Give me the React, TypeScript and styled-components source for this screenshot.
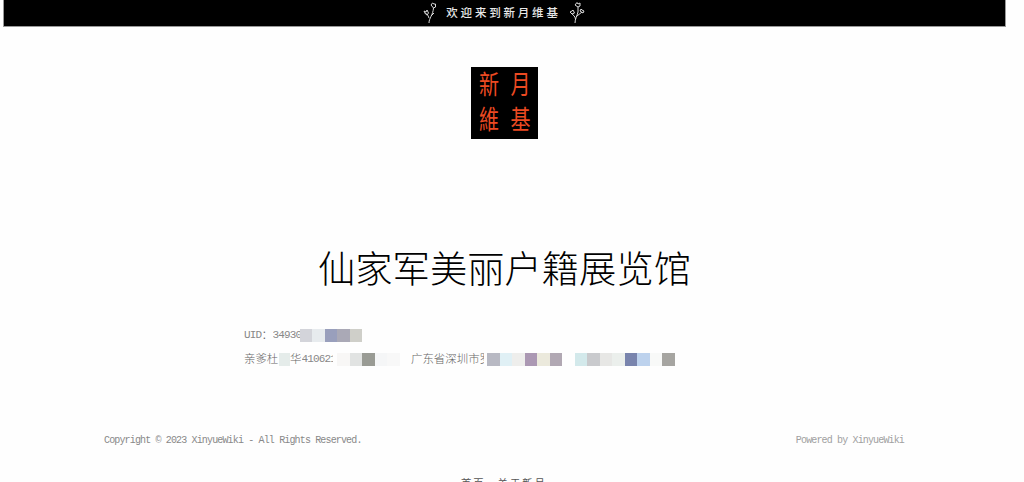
import React from 'react';
import styled, { createGlobalStyle } from 'styled-components';

const Global = createGlobalStyle`
  * { box-sizing: border-box; }
  html, body { margin: 0; background: #fff; overflow: hidden; }
`;

const Page = styled.div`
  display: flex;
  flex-direction: column;
  width: 1024px;
  height: 482px;
  padding: 0 18px 0 3px;
  overflow: hidden;
  background: #fefefe;
  font-family: 'Liberation Serif', 'Noto Sans CJK SC', sans-serif;
`;

const Banner = styled.header`
  display: flex;
  flex: none;
  justify-content: center;
  align-items: center;
  gap: 9px;
  height: 27px;
  padding: 0 1px 2px 0;
  background: #000;
  border: solid #999;
  border-width: 0 1px 1px;
  color: #e8e8e8;
`;

const Welcome = styled.span`
  font: 500 11.5px/24px 'Noto Sans CJK SC', sans-serif;
  letter-spacing: 2.8px;
  margin-right: -1px;
`;

const Seal = styled.div`
  display: grid;
  flex: none;
  grid-template-columns: 32px 31px;
  grid-template-rows: 35px 37px;
  justify-content: center;
  width: 67px;
  height: 72px;
  margin: 40px 0 0 468px;
  background: #000;
`;

const SealGlyph = styled.span`
  display: block;
  color: #ec4a22;
  font: 400 20px/34px 'Noto Sans CJK TC', sans-serif;
  text-align: center;
  transform: scaleY(1.32);
`;

const Title = styled.h1`
  flex: none;
  margin: 99px 0 0;
  color: #000;
  font: 300 37.3px/58px 'Noto Sans CJK SC', sans-serif;
  text-align: center;
  white-space: nowrap;
`;

const Record = styled.section`
  display: flex;
  flex: none;
  flex-direction: column;
  margin: 27px 0 0 241px;
`;

const Line = styled.div`
  display: flex;
  align-items: center;
  height: 24px;
  color: #777;
  white-space: nowrap;
`;

const Han = styled.span<{ $w?: number }>`
  flex: none;
  width: ${p => (p.$w ? `${p.$w}px` : 'auto')};
  overflow: hidden;
  padding-bottom: 2px;
  color: #666;
  font: 300 11.45px/20px 'Noto Sans CJK SC', sans-serif;
`;

const Mono = styled.span<{ $w: number }>`
  flex: none;
  width: ${p => p.$w}px;
  overflow: hidden;
  color: #888;
  font: 11px/22px 'Liberation Mono', monospace;
  letter-spacing: -0.87px;
`;

const Block = styled.i<{ $c: string; $w?: number }>`
  flex: none;
  width: ${p => p.$w ?? 12.5}px;
  height: 13px;
  background: ${p => p.$c};
`;

const Footer = styled.footer`
  display: flex;
  flex: none;
  justify-content: space-between;
  margin: 60px 102px 0 101px;
  color: #888;
  font: 10px/20px 'Liberation Mono', monospace;
  letter-spacing: -0.85px;
  white-space: pre;
`;

const Powered = styled.span`
  color: #a0a0a0;
`;

const Nav = styled.nav`
  display: flex;
  flex: none;
  gap: 12px;
  margin: 22px 0 0 458px;
  color: #555;
  font: 400 10.3px/20px 'Noto Sans CJK SC', sans-serif;
  letter-spacing: 2px;
`;

const blocks = (colors: string[]) => colors.map((c, i) => <Block key={i} $c={c} />);

const LeftSprig = () => (
  <svg width="14" height="23" viewBox="0 0 14 23" fill="none" stroke="#ddd" strokeWidth="1">
    <path d="M6 22C6 17 10 14 10.5 7M6 17C5 14 4 13 2.5 12M10.5 7L8 4 9.5 2 11 3 12.5 3 12.5 6ZM2.5 13L1 10 3 11 4 9 5.5 12 4 14ZM8 15L11 12" />
  </svg>
);

const RightSprig = () => (
  <svg width="16" height="23" viewBox="0 0 16 23" fill="none" stroke="#ddd" strokeWidth="1">
    <path d="M6 22C6 18 8 15 9 11L9 6M6.5 18C6 15 4 14 3 13M8 15L13 11M9 6L6 4 8 1.5 9 3 11 2 11 5ZM3 13L1 11 3 10 4 9 5.5 12ZM11 10L12 8 13 9 15 10 14 12Z" />
  </svg>
);

export default function App() {
  return (
    <Page>
      <Global />
      <Banner>
        <LeftSprig />
        <Welcome>欢迎来到新月维基</Welcome>
        <RightSprig />
      </Banner>
      <Seal>
        {['新', '月', '維', '基'].map(c => <SealGlyph key={c}>{c}</SealGlyph>)}
      </Seal>
      <Title>仙家军美丽户籍展览馆</Title>
      <Record>
        <Line>
          <Mono $w={17.5}>UID</Mono>
          <Han $w={11}>：</Han>
          <Mono $w={27}>34930</Mono>
          <Block $c="#d3d4da" $w={12.5} />
          {blocks(['#e7ebee', '#999fbc', '#aaa9b6', '#cfcfc9'])}
        </Line>
        <Line>
          <Han $w={34.5}>亲爹杜</Han>
          <Block $c="#e5ecea" $w={11.5} />
          <Han $w={11.5}>华</Han>
          <Mono $w={31}>410621</Mono>
          <Block $c="#fefefe" $w={4.5} />
          {blocks(['#f8f7f6', '#e1e3e2', '#999b94', '#f5f6f7', '#f8f8f8'])}
          <Block $c="#fefefe" $w={11.5} />
          <Han $w={73}>广东省深圳市罗</Han>
          <Block $c="#fefefe" $w={3} />
          {blocks(['#b8b9c3', '#e0f0f5', '#eeeeec', '#ab98b3', '#ebe9dc', '#b1a8b3', '#fefefe', '#d3e9eb', '#c9cacd', '#e7e7e5', '#ebefec', '#7984ad', '#bdd2ed', '#f8f9f8', '#a6a5a1'])}
        </Line>
      </Record>
      <Footer>
        <span>Copyright © 2023 XinyueWiki - All Rights Reserved.</span>
        <Powered>Powered by XinyueWiki</Powered>
      </Footer>
      <Nav>
        <span>首页</span>
        <span>关于新月</span>
      </Nav>
    </Page>
  );
}
